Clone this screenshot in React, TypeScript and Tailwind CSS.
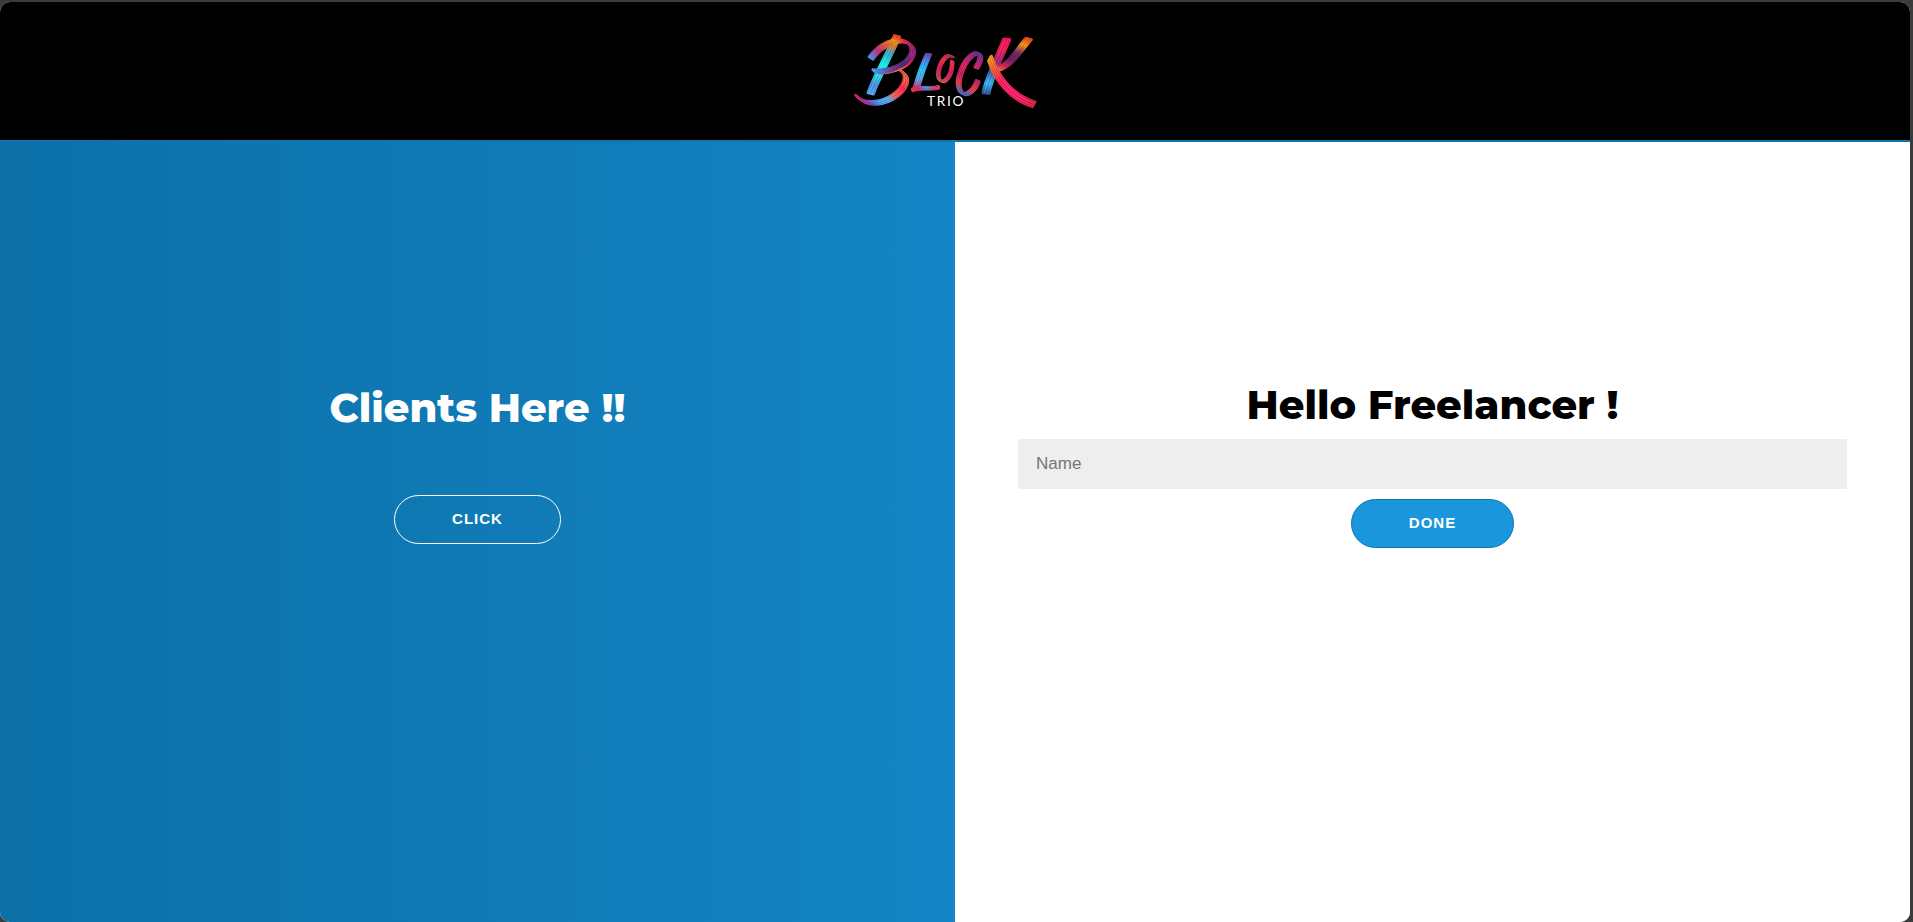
import type { ReactNode } from "react";

type BrushProps = {
  d: string;
  stroke: string;
  nib: [number, number];
  weight?: number;
};

const bristles = [
  { at: -1, tint: "#14062e", opacity: 0.18 },
  { at: -0.5, tint: "#ffffff", opacity: 0.1 },
  { at: 0, tint: "#2a0a48", opacity: 0.22 },
  { at: 0.5, tint: "#ff7a3c", opacity: 0.15 },
  { at: 1, tint: "#4a1060", opacity: 0.22 },
];

// A flat nib: parallel bristles spread along the nib vector.
function Brush({ d, stroke, nib, weight = 9 }: BrushProps) {
  return (
    <g fill="none" strokeLinecap="round" strokeLinejoin="round">
      {bristles.map(({ at }) => (
        <path key={at} d={d} stroke={stroke} strokeWidth={weight} transform={`translate(${nib[0] * at} ${nib[1] * at})`} />
      ))}
      {bristles.map(({ at, tint, opacity }) => (
        <path
          key={at}
          d={d}
          stroke={tint}
          strokeWidth={3}
          opacity={opacity}
          transform={`translate(${nib[0] * at} ${nib[1] * at})`}
        />
      ))}
    </g>
  );
}

function Gradient({ id, from, to, stops }: { id: string; from: [number, number]; to: [number, number]; stops: string[] }) {
  return (
    <linearGradient id={id} gradientUnits="userSpaceOnUse" x1={from[0]} y1={from[1]} x2={to[0]} y2={to[1]}>
      {stops.map((color, i) => (
        <stop key={i} offset={i / (stops.length - 1)} stopColor={color} />
      ))}
    </linearGradient>
  );
}

function Logo() {
  return (
    <svg viewBox="0 0 630 300" className="h-[100px] w-[210px]" role="img" aria-label="Block Trio">
      <defs>
        <Gradient id="b-stem" from={[175, 45]} to={[90, 225]} stops={["#e04018", "#f07820", "#28b8d8", "#10fff0", "#18f0f0", "#4898e8", "#58a8f8"]} />
        <Gradient id="b-bowl" from={[88, 120]} to={[222, 100]} stops={["#30a8f8", "#c03080", "#e86030", "#ffa010", "#ff2848", "#802080"]} />
        <Gradient id="b-mid" from={[100, 150]} to={[218, 110]} stops={["#38b0ff", "#5868d8", "#603088", "#402870", "#902880"]} />
        <Gradient id="b-foot" from={[50, 230]} to={[205, 170]} stops={["#e81c68", "#8048c0", "#40a8ff", "#50b8ff", "#ff5848", "#ff2850", "#ff8830"]} />
        <Gradient id="l-stem" from={[268, 100]} to={[230, 205]} stops={["#7038a8", "#3898ff", "#20d0ff", "#58b0f0", "#c83088"]} />
        <Gradient id="l-foot" from={[215, 210]} to={[300, 195]} stops={["#ff3048", "#e03068", "#48a0f8", "#c84878", "#ff3050"]} />
        <Gradient id="o-ring" from={[335, 105]} to={[295, 195]} stops={["#b02858", "#ff3040", "#e01858", "#d04058", "#ff9828"]} />
        <Gradient id="c-arc" from={[425, 100]} to={[370, 225]} stops={["#583088", "#b02878", "#e82058", "#c02068", "#f04040", "#4070e0"]} />
        <Gradient id="k-stem" from={[505, 55]} to={[435, 225]} stops={["#ff1060", "#f82058", "#b02070", "#3858a8", "#30c0ff", "#304898"]} />
        <Gradient id="k-arm" from={[570, 55]} to={[465, 155]} stops={["#e83818", "#ff9810", "#782860", "#602058", "#e02058", "#ffa020"]} />
        <Gradient id="k-leg" from={[445, 110]} to={[580, 255]} stops={["#ffa810", "#ff6030", "#ff2060", "#ff2070", "#ff2060", "#d02840"]} />
      </defs>
      <Brush d="M171 49 C148 104 113 165 92 220" stroke="url(#b-stem)" nib={[8, 2]} />
      <Brush d="M93 114 C122 74 172 52 201 67 C238 89 208 128 178 141 C151 154 121 159 104 153" stroke="url(#b-bowl)" nib={[6, 4]} weight={8} />
      <Brush d="M103 153 C148 156 194 138 214 106" stroke="url(#b-mid)" nib={[3, 4]} weight={7} />
      <Brush d="M184 154 C210 169 197 202 167 225 C128 255 73 256 52 230" stroke="url(#b-foot)" nib={[6, 5]} weight={7} />
      <Brush d="M265 103 C250 136 238 172 229 204" stroke="url(#l-stem)" nib={[7, 0]} weight={8} />
      <Brush d="M217 210 C241 198 271 210 297 202" stroke="url(#l-foot)" nib={[1, 4]} weight={6} />
      <Brush d="M337 110 C318 97 295 134 295 166 C298 203 336 182 337 124" stroke="url(#o-ring)" nib={[4, 2]} weight={6} />
      <Brush d="M409 143 C427 116 424 96 406 100 C374 113 343 184 362 215 C379 236 405 208 413 183" stroke="url(#c-arc)" nib={[5, 2]} weight={8} />
      <Brush d="M500 58 C478 112 448 170 438 219" stroke="url(#k-stem)" nib={[9, 1]} />
      <Brush d="M566 57 C535 90 517 134 467 150" stroke="url(#k-arm)" nib={[8, 2]} />
      <Brush d="M450 116 C468 172 511 231 581 253" stroke="url(#k-leg)" nib={[-4, 7]} weight={9} />
      <text x="261" y="258" fill="#ffffff" fontFamily="Lato, sans-serif" fontSize="41" letterSpacing="5">
        TRIO
      </text>
    </svg>
  );
}

function Title({ children }: { children: ReactNode }) {
  return (
    <h1 className="text-center font-['Montserrat','Inter',sans-serif] text-[40px] leading-[50px] font-extrabold">
      {children}
    </h1>
  );
}

export default function App() {
  return (
    <div className="min-h-screen bg-[#3a3c3c] pt-0.5 pr-[3px] font-['Liberation_Sans',Arial,sans-serif]">
      <div className="flex min-h-[calc(100vh-2px)] flex-col overflow-hidden rounded-[10px] bg-white">
        <header className="flex h-[140px] shrink-0 justify-center border-b-2 border-[#0f75b0] bg-black pt-[18px] pr-5">
          <Logo />
        </header>
        <main className="grid flex-1 grid-cols-2">
          <section className="flex flex-col items-center bg-linear-to-r from-[#0c70a7] to-[#1384c4] pt-[241px] text-white">
            <Title>Clients Here !!</Title>
            <button
              type="button"
              className="mt-[62px] h-[49px] rounded-full border border-white px-[57px] text-[15px] font-bold tracking-[1px]"
            >
              CLICK
            </button>
          </section>
          <form className="flex flex-col items-center bg-white px-[63px] pt-[238px] text-black">
            <Title>Hello Freelancer !</Title>
            <input
              type="text"
              aria-label="Name"
              placeholder="Name"
              className="mt-[9px] h-[50px] w-full bg-[#eeeeee] px-[18px] text-[17px] placeholder:text-[#757575]"
            />
            <button
              type="button"
              className="mt-2.5 h-[49px] rounded-full border border-[#0f75b0] bg-[#1a97dc] px-[57px] text-[15px] font-bold tracking-[1px] text-white"
            >
              DONE
            </button>
          </form>
        </main>
      </div>
    </div>
  );
}
